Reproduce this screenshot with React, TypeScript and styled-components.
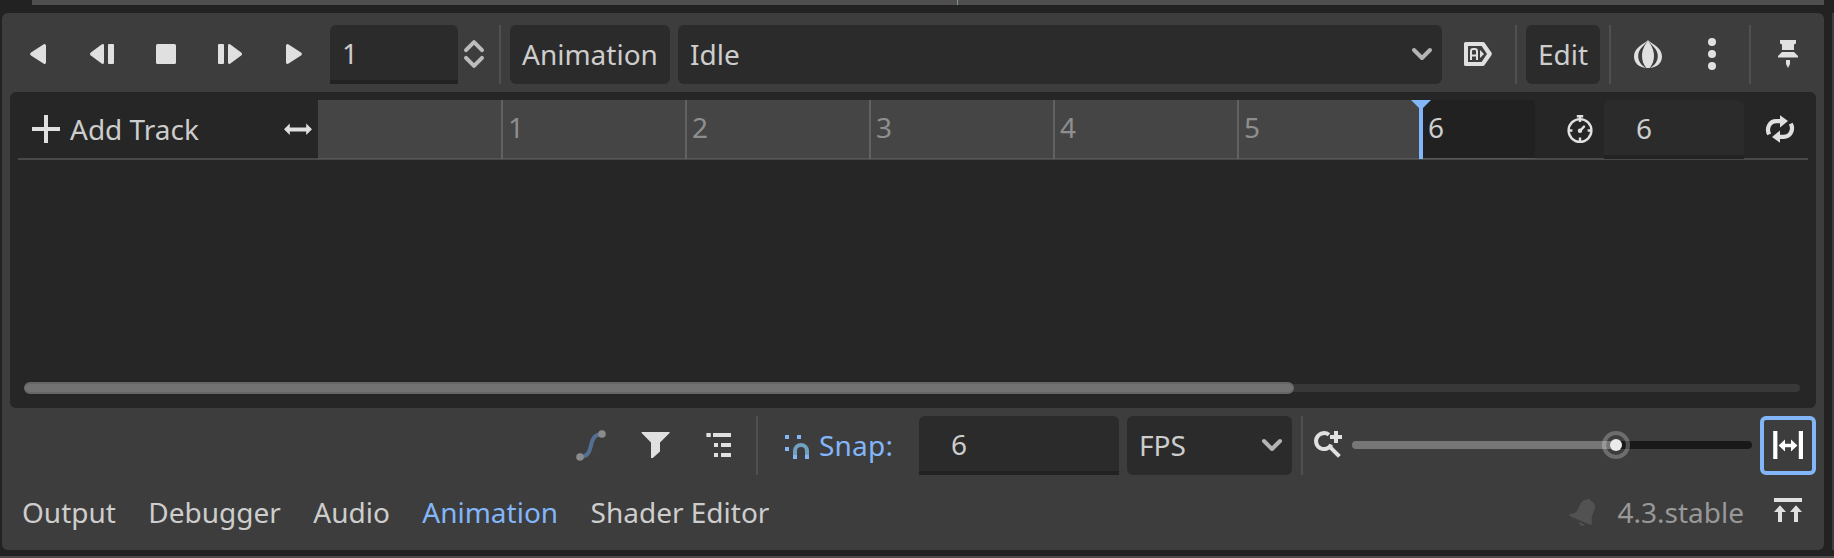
import React from "react";
import styled, { createGlobalStyle } from "styled-components";

const color = {
  base: "#222222",
  panel: "#3d3d3d",
  body: "#262626",
  field: "#2b2b2b",
  edge: "#222222",
  strip: "#4e4e4e",
  line: "#505050",
  text: "#cdcdcd",
  icon: "#e0e0e0",
  accent: "#82b6f8",
};

const GlobalStyle = createGlobalStyle`
  * { box-sizing: border-box; }
  body {
    margin: 0;
    background: ${color.base};
    color: ${color.text};
    font-family: "Noto Sans", sans-serif;
    font-size: 28px;
    line-height: 38px;
    overflow: hidden;
  }
`;

const Editor = styled.div`
  width: 1834px;
  height: 558px;
  display: flex;
  flex-direction: column;
  background: ${color.base};
`;

const ViewportEdge = styled.div`
  display: flex;
  height: 5px;
  margin: 0 10px 0 32px;
  background: ${color.strip};
`;

const AxisMark = styled.div`
  width: 1px;
  margin-left: 925px;
  background: #7d9a7d;
`;

const Middle = styled.div`
  display: flex;
  justify-content: space-between;
  height: 537px;
  margin: 8px 0 6px;
  padding-left: 2px;
`;

const SideDock = styled.div`
  width: 2px;
  background: ${color.panel};
`;

const WindowEdge = styled.div`
  height: 2px;
  background: #4e4b4c;
`;

const Panel = styled.main`
  width: 1822px;
  padding: 12px 8px 8px;
  display: flex;
  flex-direction: column;
  gap: 8px;
  background: ${color.panel};
  border-radius: 6px;
`;

const Row = styled.div<{ $end?: boolean }>`
  display: flex;
  flex: none;
  height: 59px;
  gap: 8px;
  justify-content: ${(p) => (p.$end ? "flex-end" : "flex-start")};
`;

const Icon = styled.svg`
  display: block;
  flex: none;
  width: 32px;
  height: 32px;
  margin-bottom: 1px;
  fill: ${color.icon};
  overflow: visible;
`;

const IconButton = styled.button<{ $pressed?: boolean }>`
  display: flex;
  flex: none;
  align-items: center;
  justify-content: center;
  width: 56px;
  height: 59px;
  padding: 0;
  border: ${(p) => (p.$pressed ? `4px solid ${color.accent}` : "0")};
  border-radius: 6px;
  background: none;
`;

const Separator = styled.div`
  flex: none;
  width: 4px;
  padding: 0 1px;
  background: ${color.line} content-box;
`;

const Button = styled.button<{ $width: number; $grow?: boolean }>`
  display: flex;
  align-items: center;
  justify-content: space-between;
  flex: ${(p) => (p.$grow ? "1 0 0" : "none")};
  width: ${(p) => p.$width}px;
  height: 59px;
  padding: 0 4px 1px 12px;
  border: 0;
  border-radius: 6px;
  background: ${color.field};
  color: inherit;
  font: inherit;
  white-space: nowrap;

  ${Icon} {
    margin-bottom: 0;
  }
`;

const Field = styled.div<{ $width: number; $pad: number }>`
  flex: none;
  width: ${(p) => p.$width}px;
  height: 59px;
  padding: 9px 0 0 ${(p) => p.$pad}px;
  border-bottom: 4px solid ${color.edge};
  border-radius: 6px 6px 0 0;
  background: ${color.field};
`;

const SpinGroup = styled.div`
  display: flex;
  align-items: center;
`;

const Body = styled.section`
  flex: none;
  height: 316px;
  padding: 8px;
  display: flex;
  flex-direction: column;
  background: ${color.body};
  border-radius: 6px;
`;

const TimelineRow = styled.div`
  display: flex;
  height: 60px;
  background: linear-gradient(#494949, #494949) bottom / 100% 2px no-repeat;
`;

const AddTrack = styled.div`
  display: flex;
  align-items: center;
  width: 300px;
  height: 59px;
  padding: 0 4px 0 12px;
`;

const AddLabel = styled.span`
  flex: 1;
  padding: 0 0 1px 8px;
`;

const Timeline = styled.div`
  position: relative;
  display: flex;
  width: 1217px;
  height: 59px;
  background: linear-gradient(90deg, #454545 1103px, #212121 1103px);
  color: #8e8e8e;
  border-bottom: 1px solid #565656;
`;

const Second = styled.div<{ $current?: boolean }>`
  flex: none;
  width: 184px;
  height: 59px;
  padding: 8px 0 0 5px;
  border-left: 2px solid ${(p) => (p.$current ? "transparent" : "#626262")};
  color: ${(p) => (p.$current ? color.text : "inherit")};

  &:first-child {
    width: 183px;
    border-color: transparent;
  }
`;

const Playhead = styled.svg`
  position: absolute;
  left: 1093px;
  top: 0;
  width: 20px;
  height: 59px;
  fill: ${color.accent};
`;

const LengthGroup = styled.div`
  display: flex;
  flex: 1;
  height: 59px;
  gap: 8px;
  padding-left: 29px;
  align-items: center;
`;

const ScrollTrack = styled.div`
  display: flex;
  align-items: center;
  height: 8px;
  margin: auto 8px 8px 6px;
  border-radius: 4px;
  background: #383838;
`;

const ScrollThumb = styled.div`
  width: 1270px;
  height: 12px;
  border: 1px solid #666666;
  border-width: 2px 1px;
  border-radius: 6px;
  background: #727272;
`;

const SnapToggle = styled.div`
  display: flex;
  align-items: center;
  gap: 4px;
  width: 144px;
  padding-left: 16px;
  color: ${color.accent};
`;

const SnapLabel = styled.span`
  padding-bottom: 1px;
  letter-spacing: 0.2px;
`;

const SliderBar = styled.div`
  position: relative;
  width: 400px;
  height: 8px;
  margin-bottom: 1px;
  border-radius: 4px;
  background: linear-gradient(90deg, #777777 264px, #191919 264px);
`;

const SliderHandle = styled.svg`
  position: absolute;
  left: 250px;
  top: -10px;
  width: 28px;
  height: 28px;
`;

const ZoomGroup = styled.div`
  display: flex;
  align-items: center;
  gap: 8px;
`;

const Tab = styled.div<{ $active?: boolean }>`
  flex: none;
  padding: 10px 12.4px 0 12px;
  color: ${(p) => (p.$active ? color.accent : "inherit")};
`;

const Status = styled.div`
  display: flex;
  margin-left: auto;
`;

const Version = styled.div`
  padding: 10px 16px 0 7px;
  color: #989898;
`;

const PLAY =
  "M4 12.1a.8.8 0 0 0 1.3.7l6.2-4a.95.95 0 0 0 0-1.6l-6.2-4A.8.8 0 0 0 4 3.9z";
const STEP =
  "M2.5 3h2a.5.5 0 0 1 .5.5v9a.5.5 0 0 1-.5.5h-2a.5.5 0 0 1-.5-.5v-9a.5.5 0 0 1 .5-.5zM7 12.3a.7.7 0 0 0 1.2.5l5.4-4a1 1 0 0 0 0-1.6l-5.4-4a.7.7 0 0 0-1.2.5z";

const Glyph = ({ children }: { children: React.ReactNode }) => (
  <Icon viewBox="0 0 16 16">{children}</Icon>
);

const Chevron = () => (
  <Glyph>
    <path d="M4 6l4 4 4-4" fill="none" stroke="#b4b4b4" strokeWidth="2" strokeLinecap="round" strokeLinejoin="round" />
  </Glyph>
);

const Transport = () => (
  <>
    <IconButton><Glyph><path d={PLAY} transform="matrix(-1 0 0 1 16 0)" /></Glyph></IconButton>
    <IconButton><Glyph><path d={STEP} transform="matrix(-1 0 0 1 16 0)" /></Glyph></IconButton>
    <IconButton><Glyph><rect x="3" y="3" width="10" height="10" rx=".8" /></Glyph></IconButton>
    <IconButton><Glyph><path d={STEP} /></Glyph></IconButton>
    <IconButton><Glyph><path d={PLAY} /></Glyph></IconButton>
  </>
);

const TopBar = () => (
  <Row>
    <Transport />
    <SpinGroup>
      <Field $width={128} $pad={12}>1</Field>
      <Glyph>
        <path d="M4 6.1l4-4 4 4M4 9.9l4 4 4-4" fill="none" stroke="#bcbcbc" strokeWidth="2" strokeLinecap="round" strokeLinejoin="round" />
      </Glyph>
    </SpinGroup>
    <Separator />
    <Button $width={160}>Animation</Button>
    <Button $width={0} $grow>Idle<Chevron /></Button>
    <IconButton>
      <Glyph>
        <path fillRule="evenodd" d="M1.8 2h8.7a.9.9 0 0 1 .7.3l3.5 5a1 1 0 0 1 0 1.3l-3.5 5a.9.9 0 0 1-.7.4H1.8a.8.8 0 0 1-.8-.8V2.8a.8.8 0 0 1 .8-.8zM3 4v8h6.8l2.7-4-2.7-4z" />
        <path d="M4.5 11V6.6a1.1 1.1 0 0 1 1.1-1.1h.8a1.1 1.1 0 0 1 1.1 1.1V11M4.5 8.7h3" fill="none" stroke={color.icon} />
        <path d="M9 6v4l2-2z" />
      </Glyph>
    </IconButton>
    <Separator />
    <Button $width={74}>Edit</Button>
    <Separator />
    <IconButton>
      <Glyph>
        <path d="M8 1C7.300 2.600 5 4.900 5 8.900c0 2.600.9 4.700 2.200 6.100h1.600c1.300-1.400 2.200-3.500 2.200-6.100C11 4.900 8.700 2.600 8 1z" />
        <path d="M8 1C6.200 3.200 1 4.400 1 9.300c0 3.200 2.400 5.400 6 5.700C4.400 13.500 3.100 11.500 3.100 8.900 3.100 5.400 6.500 3.600 8 1z" />
        <path d="M8 1c1.800 2.200 7 3.400 7 8.300 0 3.200-2.400 5.400-6 5.700 2.600-1.500 3.900-3.500 3.900-6.100C12.900 5.400 9.500 3.600 8 1z" />
      </Glyph>
    </IconButton>
    <IconButton>
      <Glyph><circle cx="8" cy="2" r="2" /><circle cx="8" cy="8" r="2" /><circle cx="8" cy="14" r="2" /></Glyph>
    </IconButton>
    <Separator />
    <IconButton>
      <Glyph><path d="M4 1h8v1.700l-1 .6V6H5V3.300l-1-.6zM5 7h6l2 2v.8H3V9zM7 11h2v2l-1 2-1-2z" /></Glyph>
    </IconButton>
  </Row>
);

const TrackPanel = () => (
  <Body>
    <TimelineRow>
      <AddTrack>
        <Glyph><path d="M7 1v6H1v2h6v6h2V9h6V7H9V1z" /></Glyph>
        <AddLabel>Add Track</AddLabel>
        <Glyph><path d="M3.900 5.300v1.900h8.200V5.300L15 8.100 12.100 11V9.200H3.900V11L1 8.100z" /></Glyph>
      </AddTrack>
      <Timeline>
        <Second />
        {[1, 2, 3, 4, 5].map((n) => <Second key={n}>{n}</Second>)}
        <Second $current>6</Second>
        <Playhead viewBox="0 0 20 59"><path d="M0 0h20l-8 8v51H8V8z" /></Playhead>
      </Timeline>
      <LengthGroup>
        <Glyph>
          <g fill="none" stroke={color.icon} strokeWidth="1.200">
            <circle cx="8" cy="8.750" r="5.700" />
            <path d="M8 2v2.500M8 12.300V14M2.500 8.750h1.700M11.800 8.750h1.700" />
            <path d="M8 8.900l2-2.100" strokeLinecap="round" strokeWidth="1.200" />
          </g>
          <rect x="6.400" y="1" width="3.200" height="1.300" rx=".3" />
          <circle cx="8" cy="8.900" r="1.100" />
        </Glyph>
        <Field $width={140} $pad={32}>6</Field>
        <IconButton>
          <Glyph>
            <g fill="none" stroke={color.icon} strokeWidth="2.100">
              <path d="M2.600 10.700C1 7.600 2.800 4.100 6.200 4.100H8.500" />
              <path d="M13.400 5.300c1.600 3.100-.2 6.600-3.600 6.600H7.500" />
            </g>
            <path d="M8 1.100l4 2.900-4 3.200zM8 14.900L4 12l4-3.200z" />
          </Glyph>
        </IconButton>
      </LengthGroup>
    </TimelineRow>
    <ScrollTrack><ScrollThumb /></ScrollTrack>
  </Body>
);

const BottomBar = () => (
  <Row $end>
    <IconButton>
      <Glyph>
        <path d="M2.500 13.900C10.800 13.900 5.200 2.600 13.500 2.600" fill="none" stroke="#536f91" strokeWidth="2" />
        <circle cx="2.500" cy="14" r="1.900" fill="#8b8b8b" />
        <circle cx="13.500" cy="2.500" r="1.900" fill="#8b8b8b" />
      </Glyph>
    </IconButton>
    <IconButton>
      <Glyph><path d="M1.300 1.500h14v.5L10.500 6.800v4.500L6.900 14.500H6V6.800L1.300 2z" /></Glyph>
    </IconButton>
    <IconButton>
      <Glyph><path d="M1.700 2h2.200v2H1.700zM5 2h9v2H5zM5.500 7h2v2h-2zM9 7h5v2H9zM5.500 12h2v2h-2zM9 12h5v2H9z" /></Glyph>
    </IconButton>
    <Separator />
    <SnapToggle>
      <Glyph>
        <path d="M1 3h2v2H1zM7 3h2v2H7zM1 9h2v2H1zM5 13h2v2H5zM11 13h2v2h-2z" fill={color.accent} />
        <path d="M6 13v-2a3 3 0 0 1 6 0v2" fill="none" stroke="#71a1c0" strokeWidth="2" />
      </Glyph>
      <SnapLabel>Snap:</SnapLabel>
    </SnapToggle>
    <Field $width={200} $pad={32}>6</Field>
    <Button $width={165}>FPS<Chevron /></Button>
    <Separator />
    <ZoomGroup>
      <Glyph>
        <path d="M8.500 2.900A4 4 0 1 0 9.600 7.800" fill="none" stroke={color.icon} strokeWidth="2" />
        <path d="M8.400 8.400l5.300 5.300" stroke={color.icon} strokeWidth="2" />
        <path d="M11 1h2v2h2v2h-2v2h-2V5H9V3h2z" />
      </Glyph>
      <SliderBar>
        <SliderHandle viewBox="0 0 28 28">
          <circle cx="14" cy="14" r="12" fill="none" stroke="#ffffff" strokeOpacity=".25" strokeWidth="4" />
          <circle cx="14" cy="14" r="6" fill="#ebebeb" />
        </SliderHandle>
      </SliderBar>
    </ZoomGroup>
    <IconButton $pressed>
      <Glyph>
        <g fill="#ffffff">
          <path d="M.6 1h2.100v14H.6zM13.400 1h2.100v14h-2.100z" />
          <path d="M6.500 5.300v2.100h3V5.300l3.200 2.900-3.200 3V9.100h-3v2.100l-3.200-3z" />
        </g>
      </Glyph>
    </IconButton>
  </Row>
);

const TabBar = () => (
  <Row>
    {["Output", "Debugger", "Audio", "Animation", "Shader Editor"].map((name) => (
      <Tab key={name} $active={name === "Animation"}>{name}</Tab>
    ))}
    <Status>
      <IconButton>
        <Glyph>
          <g fill="#525252">
            <path d="M2 8.900c2.600 0 3.600-1.200 4.400-3.200C7.300 3.300 8.500 1.600 10.700 1.700c.4-.7 1.500-.3 1.400.5 2 .8 2.800 2.500 2.300 4.200-.8 2.400-2 4-1.400 6.600.2 1-.3 1.600-1.200 1.200L2.300 10.200c-.8-.4-.8-1.300-.3-1.300z" />
            <path d="M6.500 13l3 1.400c-.6.800-3 .5-3-1.400z" />
          </g>
        </Glyph>
      </IconButton>
      <Version>4.3.stable</Version>
      <IconButton>
        <Glyph><path d="M1 1h14v2H1zM4 4.600L7 8H5v5H3V8H1zM12 4.600L15 8h-2v5h-2V8H9z" /></Glyph>
      </IconButton>
    </Status>
  </Row>
);

export default function App() {
  return (
    <>
      <GlobalStyle />
      <Editor>
        <ViewportEdge><AxisMark /></ViewportEdge>
        <Middle>
          <Panel>
            <TopBar />
            <TrackPanel />
            <BottomBar />
            <TabBar />
          </Panel>
          <SideDock />
        </Middle>
        <WindowEdge />
      </Editor>
    </>
  );
}
